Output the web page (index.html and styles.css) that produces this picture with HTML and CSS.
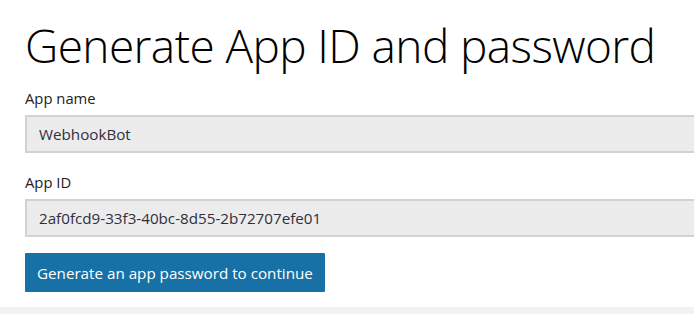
FILE: index.html
```html
<!DOCTYPE html>
<html lang="en">
<head>
<meta charset="utf-8">
<title>Generate App ID and password</title>
<link rel="stylesheet" href="styles.css">
</head>
<body>
<main class="page">
  <h1 class="title">Generate App ID and password</h1>
  <form class="form">
    <div class="field">
      <label class="label" for="appname">App name</label>
      <input class="input" id="appname" type="text" value="WebhookBot" readonly>
    </div>
    <div class="field">
      <label class="label" for="appid">App ID</label>
      <input class="input" id="appid" type="text" value="2af0fcd9-33f3-40bc-8d55-2b72707efe01" readonly>
    </div>
    <button class="btn" type="button">Generate an app password to continue</button>
  </form>
</main>
<footer class="footer"></footer>
</body>
</html>
```
FILE: styles.css
```css
html, body {
  margin: 0;
  padding: 0;
  overflow: hidden;
  background: #ffffff;
}
body {
  font-family: "Open Sans", "Noto Sans", sans-serif;
  color: #333333;
  width: 694px;
  height: 314px;
  display: flex;
  flex-direction: column;
}
.page {
  padding: 0 0 0 25px;
  height: 307px;
  box-sizing: border-box;
}
.title {
  margin: 0;
  padding-top: 14px;
  font-family: "Open Sans", sans-serif;
  font-weight: 300;
  font-size: 46px;
  line-height: 62px;
  color: #000000;
  letter-spacing: -0.6px;
  white-space: nowrap;
}
.form {
  display: flex;
  flex-direction: column;
  margin-top: 12px;
}
.field {
  display: flex;
  flex-direction: column;
}
.field + .field {
  margin-top: 19px;
}
.label {
  font-size: 14.8px;
  line-height: 20px;
  color: #222222;
  margin-bottom: 7px;
}
.input {
  width: 669px;
  height: 38px;
  box-sizing: border-box;
  border: 2px solid #d2d2d2;
  border-right: none;
  background: #ececec;
  padding: 0 12px;
  font-family: "Open Sans", sans-serif;
  font-size: 15.2px;
  color: #2f2f3f;
  outline: none;
  margin: 0;
}
.btn {
  margin-top: 16px;
  align-self: flex-start;
  width: 300px;
  height: 39px;
  border: none;
  border-radius: 1px;
  background: #1770a6;
  color: #ffffff;
  font-family: "Open Sans", sans-serif;
  font-size: 15.2px;
  padding: 0 12px;
  text-align: left;
  cursor: pointer;
}
.footer {
  flex: 1;
  background: #f2f2f2;
}
```
